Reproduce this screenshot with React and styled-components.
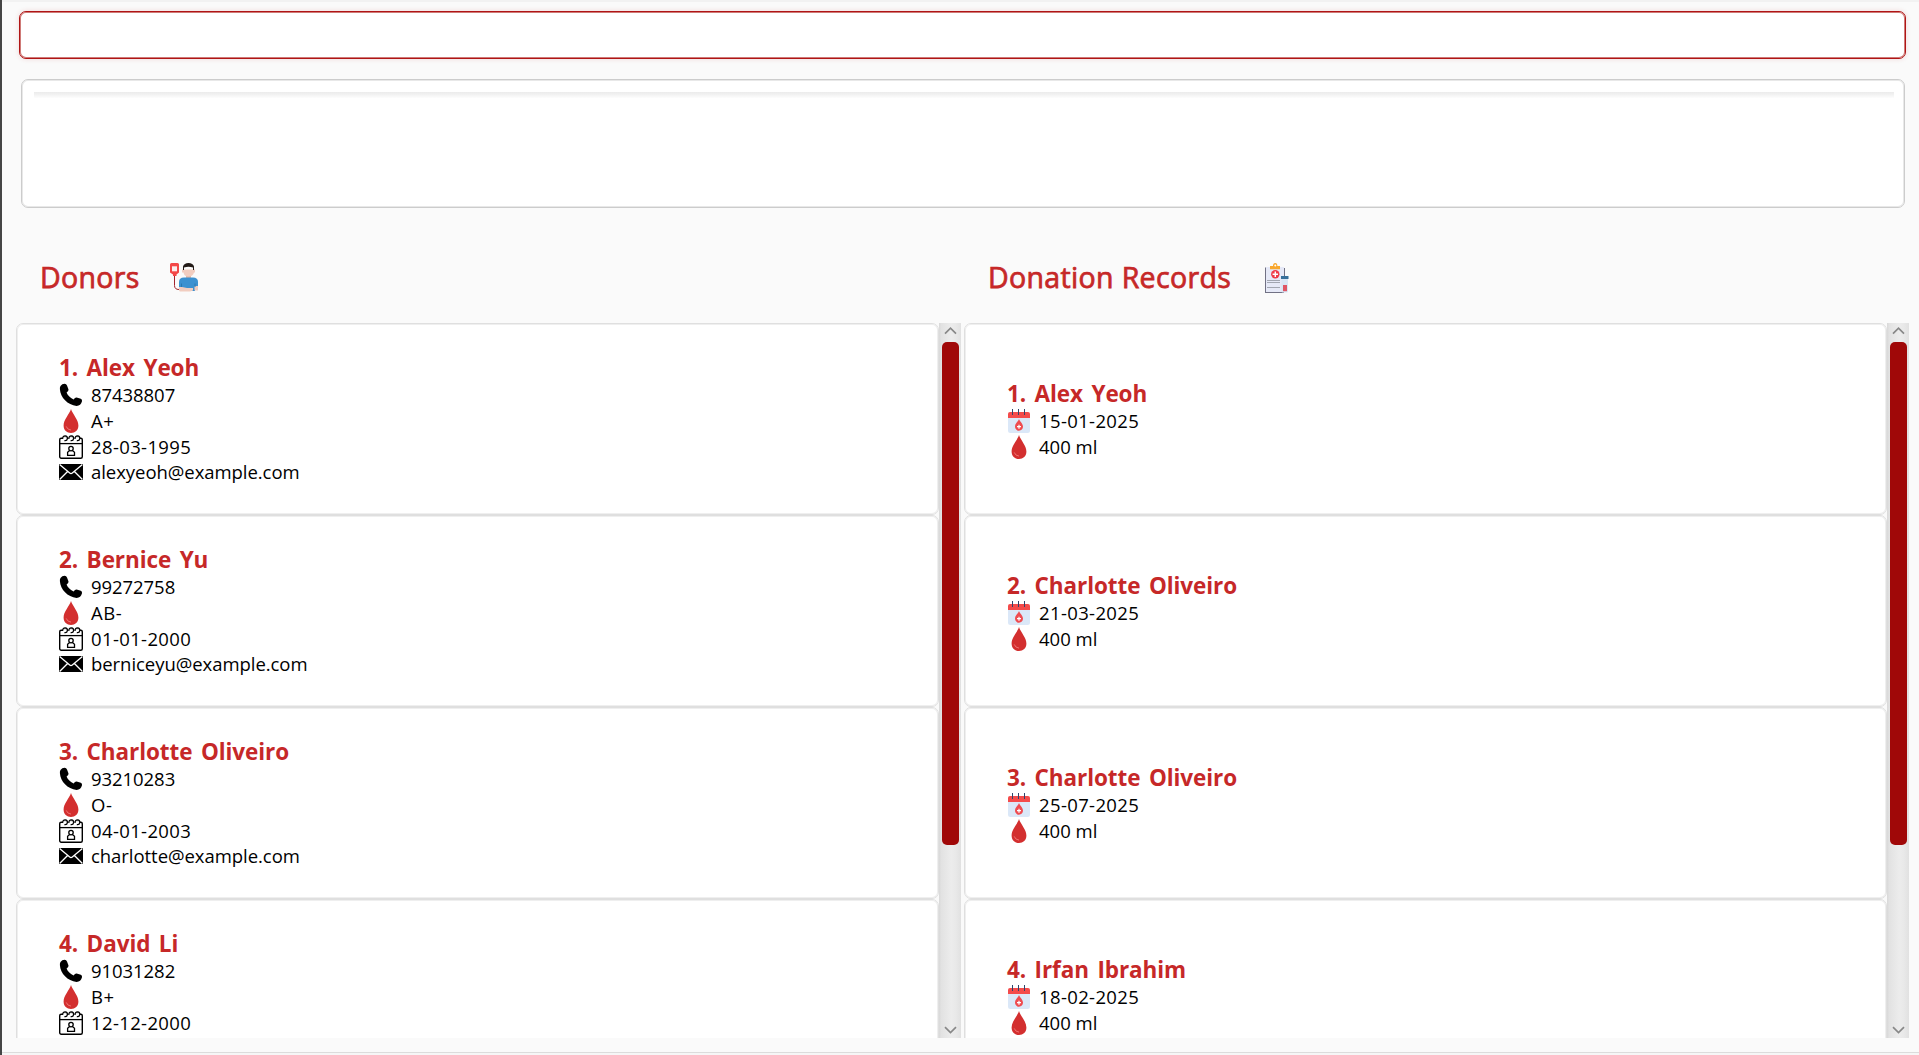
import React from "react";
import styled, { createGlobalStyle } from "styled-components";

const GlobalStyle = createGlobalStyle`
  *, *::before, *::after { box-sizing: border-box; }
  body { margin: 0; background: #fafafa; overflow: hidden; }
`;

const Window = styled.div`
  display: flex;
  flex-direction: column;
  width: 1919px;
  height: 1055px;
  overflow: hidden;
  background: #fafafa;
  border-left: 2px solid #454545;
  font-family: "Open Sans", "Noto Sans", sans-serif;
  color: #000;
`;

const TopEdge = styled.div`
  flex: none;
  height: 2px;
  background: #f2f2f2;
`;

const CommandBox = styled.input`
  flex: none;
  display: block;
  height: 48px;
  margin: 9px 13px 0 17px;
  padding: 0 12px;
  background: #fff;
  border: 1px solid #b01515;
  border-radius: 7px;
  outline: none;
  font: inherit;
  box-shadow: inset 0 0 0 1px #cf7a77, 0 0 5px rgba(183, 28, 28, 0.16);
`;

const ResultBox = styled.div`
  flex: none;
  height: 129px;
  margin: 20px 14px 0 19px;
  padding: 12px 10px 0 12px;
  background: #fff;
  border: 1px solid #cccccc;
  border-radius: 7px;
  box-shadow: inset 0 0 0 1px #e8e8e8;
`;

const ResultShade = styled.div`
  height: 6px;
  background: linear-gradient(#ebebeb, #f3f3f3 50%, #fdfdfd);
`;

const Columns = styled.div`
  flex: none;
  display: grid;
  grid-template-columns: 945px 945px;
  column-gap: 3px;
  margin: 35px 0 0 14px;
`;

const Panel = styled.section`
  display: flex;
  flex-direction: column;
`;

const PanelHeader = styled.header`
  display: flex;
  align-items: flex-start;
  height: 80px;
  padding: 14px 0 0 24px;
`;

const PanelTitle = styled.h1`
  width: ${(p) => p.$width}px;
  margin: 0;
  font-size: 28.5px;
  line-height: 40px;
  font-weight: 500;
  letter-spacing: 0.35px;
  white-space: nowrap;
  color: #c62828;
  -webkit-text-stroke: 0.75px #c62828;
`;

const HeaderIcon = styled.svg`
  flex: none;
  display: block;
  width: 30px;
  height: 30px;
  margin-top: 6px;
`;

const ListArea = styled.div`
  display: flex;
  height: 715px;
`;

const Cards = styled.div`
  flex: none;
  width: 923px;
  height: 715px;
  overflow: hidden;
`;

const Card = styled.article`
  height: 192px;
  padding: ${(p) => p.$top}px 0 0 42px;
  background: #fff;
  border: 1px solid #dfdfdf;
  border-radius: 7px;
  box-shadow: inset 0 0 0 1px #efefef;
`;

const Name = styled.h2`
  margin: 0;
  height: 32px;
  font-size: 22.5px;
  line-height: 36px;
  font-weight: 700;
  letter-spacing: -0.08px;
  word-spacing: 2.7px;
  white-space: nowrap;
  color: #c62828;
`;

const Field = styled.div`
  display: flex;
  align-items: center;
  gap: 8px;
  height: ${(p) => p.$height || 26}px;
  font-size: 18.5px;
  line-height: 26px;
  letter-spacing: ${(p) => p.$spacing || 0}px;
  white-space: nowrap;
`;

const FieldIcon = styled.svg`
  flex: none;
  display: block;
  width: 24px;
  height: 24px;
`;

const ScrollBar = styled.div`
  flex: none;
  display: flex;
  flex-direction: column;
  align-items: center;
  width: 22px;
  height: 715px;
  background: linear-gradient(90deg, #d8d8d8, #e2e2e2 10%, #ececec 55%, #e9e9e9 75%, #e1e1e1);
`;

const Arrow = styled.svg`
  flex: none;
  display: block;
  width: 22px;
  height: 19px;
`;

const Thumb = styled.div`
  flex: none;
  width: 17px;
  height: 503px;
  margin-bottom: 174px;
  background: #a00808;
  border-radius: 5px;
`;

const BottomEdge = styled.div`
  flex: none;
  height: 3px;
  margin-top: 14px;
  background: #f6f6f6;
  border-top: 1px solid #dcdcdc;
`;

const PhoneIcon = () => (
  <FieldIcon viewBox="0 0 24 24">
    <path d="M1.5 3 Q3 .8 5.6 .8 Q7.4 .8 8 2.6 L9.5 6.6 Q9.8 8.2 7.6 9.4 Q9 13.4 14.6 16.6 Q16 14.2 17.6 14.4 L21.8 15.8 Q23.4 16.6 23 18.3 Q21.8 22.8 17.6 23 C8.6 22 1.4 14.5 .9 6.3 Q.7 4.3 1.5 3Z" fill="#000" />
  </FieldIcon>
);

const DropIcon = () => (
  <FieldIcon viewBox="0 0 24 24">
    <path d="M12 0 C13.5 5 19.4 10.5 19.4 16.5 C19.4 21.2 16.1 24 12 24 C7.9 24 4.6 21.2 4.6 16.5 C4.6 10.5 10.5 5 12 0Z" fill="#d32f2f" />
    <path d="M7.2 17.4 Q8.4 20.8 12 21.1" fill="none" stroke="#ef7272" strokeWidth="1" />
  </FieldIcon>
);

const BirthdayIcon = () => (
  <FieldIcon viewBox="0 0 24 24">
    <rect x=".7" y="3.2" width="22.6" height="20" rx="1.5" fill="#fff" stroke="#000" strokeWidth="1.4" />
    <path d="M1 8.6H23" stroke="#000" strokeWidth="1.3" />
    <path d="M3.4 3.2H21" stroke="#fff" strokeWidth="2" />
    {[3.6, 9.8, 16].map((x) => (
      <path
        key={x}
        d={`M${x} 4 Q${x} .8 ${x + 2.6} .8 Q${x + 5} 1 ${x + 4.8} 3.6 Q${x + 4.4} 6 ${x + 1.8} 5.6`}
        fill="none"
        stroke="#000"
        strokeWidth="1.3"
      />
    ))}
    <circle cx="12" cy="13.6" r="2.2" fill="none" stroke="#000" strokeWidth="1.3" />
    <path d="M10.6 15.6 L8.6 17.3 V20.3 H15.5 V17.3 L13.4 15.6" fill="none" stroke="#000" strokeWidth="1.3" />
  </FieldIcon>
);

const MailIcon = () => (
  <FieldIcon viewBox="0 0 24 24">
    <path d="M0 4H24V20H0Z" fill="#000" />
    <path d="M.6 4.5 L10.7 13 Q12 14 13.3 13 L23.4 4.5 M.6 19.5 L8.6 11.5 M23.4 19.5 L15.4 11.5" fill="none" stroke="#fff" strokeWidth="1.3" />
  </FieldIcon>
);

const DonationDateIcon = () => (
  <FieldIcon viewBox="0 0 24 24">
    <path d="M1 9H23V21.5Q23 24 20.5 24H3.5Q1 24 1 21.5Z" fill="#dbe8f8" />
    <path d="M1 9V5Q1 3 3 3H21Q23 3 23 5V9Z" fill="#f44b4b" />
    <path d="M5.5 0V6M11.5 0V6M17.5 0V6" stroke="#31446b" strokeWidth="1" />
    <path d="M12 10 C12.8 12.5 16 14.5 16 17.6 C16 20 14.3 21.7 12 21.7 C9.7 21.7 8 20 8 17.6 C8 14.5 11.2 12.5 12 10Z" fill="#ef4b50" />
    <path d="M12 15.7V19.7M10 17.7H14" stroke="#fff" strokeWidth="1.2" />
  </FieldIcon>
);

const DonorIcon = () => (
  <HeaderIcon viewBox="0 0 30 30">
    <path d="M5.5 11V22.5Q5.5 26.5 10 26.5" fill="none" stroke="#a3242d" strokeWidth="1" />
    <path d="M2.5 0H8.5Q10 0 10 1.5V9.5L7.5 11.5V13H4V11.5L1 9.5V1.5Q1 0 2.5 0Z" fill="#f34747" />
    <path d="M3 3.3H8V8.3H3Z" fill="#fbeeee" />
    <path d="M17 12H22V17H17Z" fill="#e3b7a6" />
    <path d="M10 19Q10 14.5 15 14.5H24Q29 14.5 29 19V24H10Z" fill="#3c91d0" />
    <path d="M12.5 22H26V28H12.5Z" fill="#3c91d0" />
    <path d="M10 24V27Q10 28.5 11.5 28.5H21L24 27.5V25H18L13 24Z M25.5 23H29V27.5H25.5Z" fill="#f1cdc0" />
    <path d="M13 6.5H26V9.5H25Q24 13.5 19.5 13.5Q15 13.5 14.5 9.5H13Z" fill="#f1cdc0" />
    <path d="M14 7V3.5Q15 0 19.5 0Q24 0 25 3.5V7H24V4.5Q19.5 2.8 15 4.5V7Z" fill="#231b17" />
    <path d="M12.5 20.5V24M26 20.5V24" stroke="#2c78b0" strokeWidth="1" />
  </HeaderIcon>
);

const RecordsIcon = () => (
  <HeaderIcon viewBox="0 0 30 30">
    <path d="M1 4.5H5V30H1Z" fill="#717184" />
    <path d="M2 4H20V29H2Z" fill="#e6e9f7" />
    <path d="M20.5 5V14M1.5 29.5H20" stroke="#717184" strokeWidth="1" />
    <path d="M6 6.3V3H9Q9 0 11.2 0Q13.4 0 13.4 3H16V6.3Z" fill="#f8a72c" />
    <circle cx="11.3" cy="2.5" r="1" fill="#fff" />
    <circle cx="11.3" cy="11.3" r="4.2" fill="#ef3b48" />
    <path d="M11.3 8.6V14M8.6 11.3H14" stroke="#fff" strokeWidth="1.4" />
    <path d="M3 17.5H16M3 19.5H16M3 24.5H16" stroke="#a2a6b1" strokeWidth="1" />
    <path d="M17.5 15H24V28Q24 29.5 22.5 29.5H19Q17.5 29.5 17.5 28Z" fill="#d8e6f5" />
    <path d="M17 13H24.5V16H17Z" fill="#37709b" />
    <path d="M19 22H23V28.2H19Z" fill="#df5665" />
  </HeaderIcon>
);

const ListScrollBar = () => (
  <ScrollBar>
    <Arrow viewBox="0 0 22 19">
      <path d="M6 10.7 L11.5 5.2 L17 10.7" fill="none" stroke="#888" strokeWidth="1.7" />
    </Arrow>
    <Thumb />
    <Arrow viewBox="0 0 22 19">
      <path d="M6 8.2 L11.5 13.5 L17 8.2" fill="none" stroke="#888" strokeWidth="1.7" />
    </Arrow>
  </ScrollBar>
);

const donors = [
  { name: "Alex Yeoh", phone: "87438807", blood: "A+", birth: "28-03-1995", email: "alexyeoh@example.com" },
  { name: "Bernice Yu", phone: "99272758", blood: "AB-", birth: "01-01-2000", email: "berniceyu@example.com" },
  { name: "Charlotte Oliveiro", phone: "93210283", blood: "O-", birth: "04-01-2003", email: "charlotte@example.com" },
  { name: "David Li", phone: "91031282", blood: "B+", birth: "12-12-2000" },
];

const records = [
  { name: "Alex Yeoh", date: "15-01-2025", volume: "400 ml" },
  { name: "Charlotte Oliveiro", date: "21-03-2025", volume: "400 ml" },
  { name: "Charlotte Oliveiro", date: "25-07-2025", volume: "400 ml" },
  { name: "Irfan Ibrahim", date: "18-02-2025", volume: "400 ml" },
];

export default function App() {
  return (
    <Window>
      <GlobalStyle />
      <TopEdge />
      <CommandBox aria-label="Command" />
      <ResultBox>
        <ResultShade />
      </ResultBox>
      <Columns>
        <Panel>
          <PanelHeader>
            <PanelTitle $width={129}>Donors</PanelTitle>
            <DonorIcon />
          </PanelHeader>
          <ListArea>
            <Cards>
              {donors.map((d, i) => (
                <Card key={d.name} $top={26}>
                  <Name>{i + 1}. {d.name}</Name>
                  <Field $spacing={-0.06}><PhoneIcon />{d.phone}</Field>
                  <Field $spacing={0.6}><DropIcon />{d.blood}</Field>
                  <Field $spacing={0.36}><BirthdayIcon />{d.birth}</Field>
                  {d.email && <Field $height={23} $spacing={-0.05}><MailIcon />{d.email}</Field>}
                </Card>
              ))}
            </Cards>
            <ListScrollBar />
          </ListArea>
        </Panel>
        <Panel>
          <PanelHeader>
            <PanelTitle $width={276}>Donation Records</PanelTitle>
            <RecordsIcon />
          </PanelHeader>
          <ListArea>
            <Cards>
              {records.map((r, i) => (
                <Card key={i} $top={52}>
                  <Name>{i + 1}. {r.name}</Name>
                  <Field $spacing={0.36}><DonationDateIcon />{r.date}</Field>
                  <Field><DropIcon />{r.volume}</Field>
                </Card>
              ))}
            </Cards>
            <ListScrollBar />
          </ListArea>
        </Panel>
      </Columns>
      <BottomEdge />
    </Window>
  );
}
